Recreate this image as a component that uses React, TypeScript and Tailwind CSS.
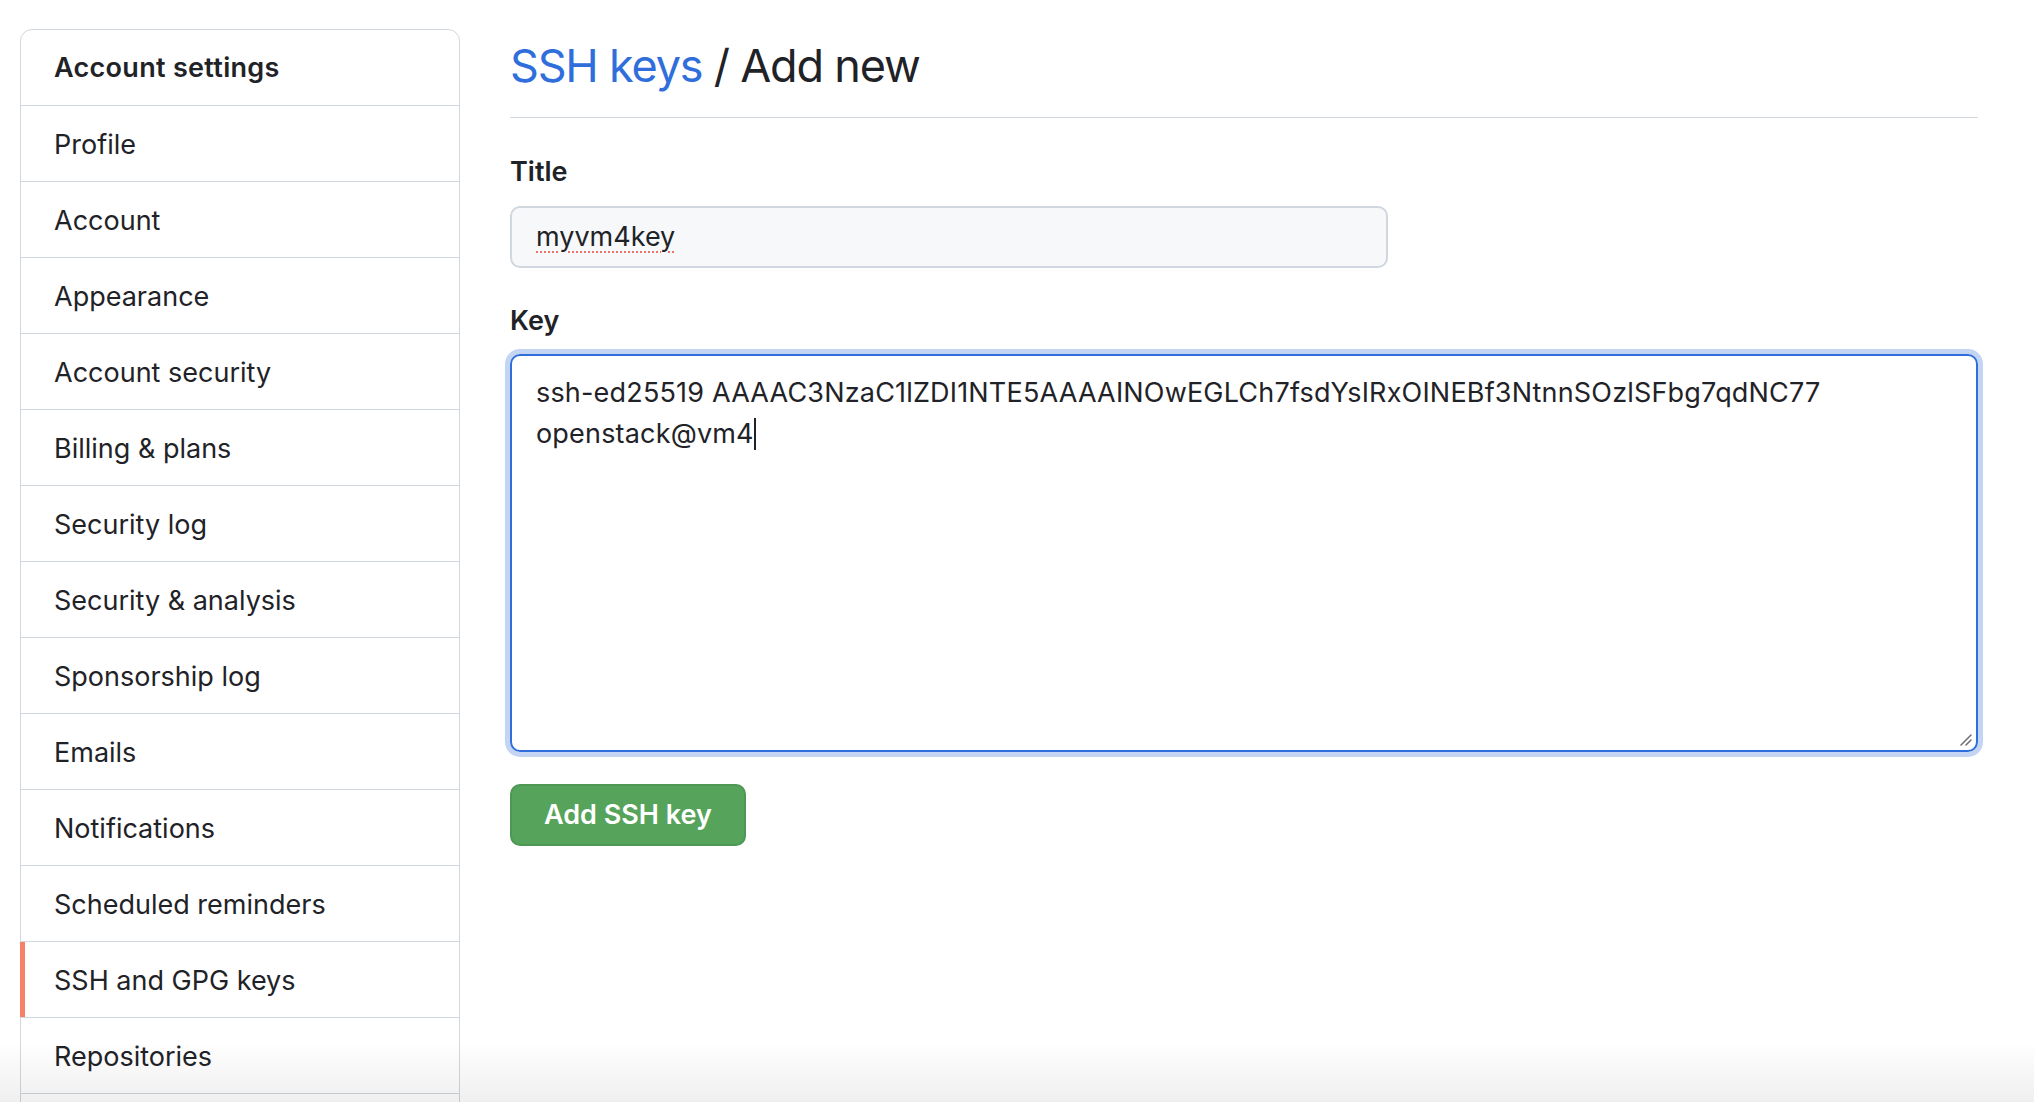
import React from 'react';

const navItems = [
    'Profile',
    'Account',
    'Appearance',
    'Account security',
    'Billing & plans',
    'Security log',
    'Security & analysis',
    'Sponsorship log',
    'Emails',
    'Notifications',
    'Scheduled reminders',
    'SSH and GPG keys',
    'Repositories',
    'Packages',
];

const fontStack = "font-['Inter','Liberation_Sans',sans-serif]";

const Sidebar: React.FC<{ active: string }> = ({ active }) => (
    <nav className="w-[440px] shrink-0 border border-[#d0d7de] rounded-xl bg-white">
        <div className="h-[75px] flex items-center pt-[2px] px-[33px] text-[27px] font-semibold tracking-[0.3px] text-[#1f2328]">
            Account settings
        </div>
        {navItems.map((item) => (
            <div
                key={item}
                className="relative h-[76px] flex items-center pt-[3px] px-[33px] border-t border-[#d0d7de] text-[27px] text-[#1f2328]"
            >
                {/* selected marker sits over the left border */}
                {item === active && <span className="absolute -left-px top-0 bottom-0 w-[5px] bg-[#f78166]" />}
                {item}
            </div>
        ))}
    </nav>
);

// the little macOS-style resize grip in the textarea corner
const ResizeGrip = () => (
    <svg className="absolute right-[4px] bottom-[4px]" width="14" height="14" viewBox="0 0 14 14">
        <path d="M3 13 L13 3 M8 13 L13 8" stroke="#6e6e6e" strokeWidth="1.5" strokeLinecap="round" />
    </svg>
);

export default function App() {
    return (
        <div className={`min-h-screen bg-white ${fontStack}`}>
            <div className="flex gap-[50px] pt-[29px] pl-[20px] pr-[56px]">
                <Sidebar active="SSH and GPG keys" />

                <main className="flex-1 min-w-0">
                    <div className="pt-[8px] pb-[22px] border-b border-[#d0d7de]">
                        <h2 className="text-[45px] leading-[58px] tracking-[-1.2px] text-[#1f2328]">
                            <a className="text-[#2f6edb]">SSH keys</a> / Add new
                        </h2>
                    </div>

                    <div className="mt-[34px]">
                        <label className="block text-[27px] leading-[40px] font-semibold text-[#1f2328]">Title</label>
                        <div className="mt-[14px] w-[878px] h-[62px] flex items-center px-[24px] bg-[#f6f8fa] border-2 border-[#d0d7de] rounded-[10px] text-[27px] text-[#1f2328]">
                            <span className="underline decoration-dotted decoration-[#f0706a] decoration-2 underline-offset-[6px]">
                                myvm4key
                            </span>
                        </div>
                    </div>

                    <div className="mt-[33px]">
                        <label className="block text-[27px] leading-[40px] font-semibold text-[#1f2328]">Key</label>
                        <div className="relative mt-[13px] h-[398px] pt-[16px] px-[24px] border-2 border-[#2f6edb] rounded-[10px] ring-[5px] ring-[#c3d5f3] text-[27px] leading-[41px] tracking-[0.18px] text-[#1f2328]">
                            <div className="whitespace-nowrap">
                                ssh-ed25519 AAAAC3NzaC1lZDI1NTE5AAAAINOwEGLCh7fsdYsIRxOINEBf3NtnnSOzlSFbg7qdNC77
                            </div>
                            <div className="whitespace-nowrap flex items-center">
                                openstack@vm4
                                <span className="inline-block w-[2px] h-[32px] bg-[#1f2328]" />
                            </div>
                            <ResizeGrip />
                        </div>
                    </div>

                    <button
                        type="button"
                        className="mt-[32px] h-[62px] px-[32px] bg-[#56a35b] border-2 border-[#4f9754] rounded-[10px] text-white text-[27px] font-semibold"
                    >
                        Add SSH key
                    </button>
                </main>
            </div>

            {/* faint shade along the bottom of the window */}
            <div className="fixed inset-x-0 bottom-0 h-[60px] pointer-events-none bg-linear-to-b from-transparent to-[#00000010]" />
        </div>
    );
}
